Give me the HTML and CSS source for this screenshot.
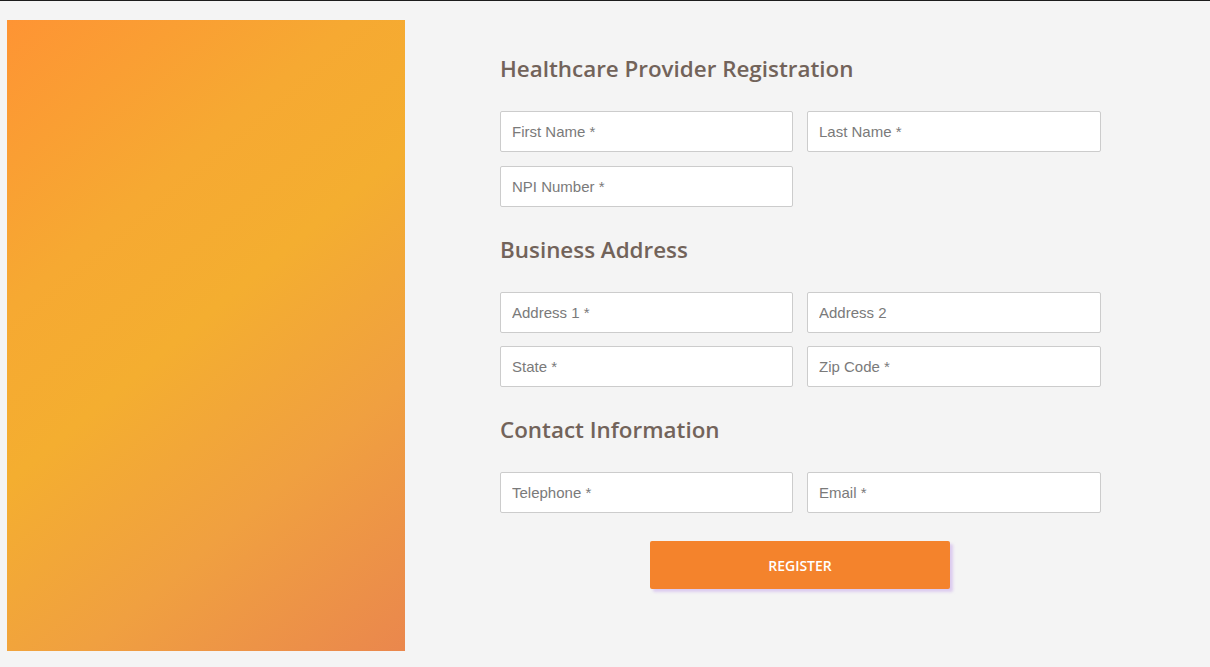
FILE: index.html
```html
<!DOCTYPE html>
<html lang="en">
<head>
<meta charset="utf-8">
<title>Healthcare Provider Registration</title>
<link rel="stylesheet" href="styles.css">
</head>
<body>
<div class="page">
  <aside class="hero"></aside>
  <form class="form" onsubmit="return false">
    <h2 class="section-title">Healthcare Provider Registration</h2>
    <div class="grid">
      <input class="field" type="text" placeholder="First Name *">
      <input class="field" type="text" placeholder="Last Name *">
      <input class="field" type="text" placeholder="NPI Number *">
    </div>
    <h2 class="section-title">Business Address</h2>
    <div class="grid grid--tight">
      <input class="field" type="text" placeholder="Address 1 *">
      <input class="field" type="text" placeholder="Address 2">
      <input class="field" type="text" placeholder="State *">
      <input class="field" type="text" placeholder="Zip Code *">
    </div>
    <h2 class="section-title">Contact Information</h2>
    <div class="grid">
      <input class="field" type="text" placeholder="Telephone *">
      <input class="field" type="text" placeholder="Email *">
    </div>
    <div class="actions">
      <button class="btn" type="submit">REGISTER</button>
    </div>
  </form>
</div>
</body>
</html>
```

FILE: styles.css
```css
html, body {
  margin: 0;
  padding: 0;
  height: 100%;
}
body {
  background: #f4f4f4;
  border-top: 1px solid #1c1c1c;
  box-sizing: border-box;
  font-family: "Open Sans", "Liberation Sans", sans-serif;
}
.page {
  display: flex;
  align-items: flex-start;
  padding: 19px 0 0 7px;
}
.hero {
  flex: 0 0 398px;
  height: 631px;
  background: linear-gradient(140deg, #fe9434 0%, #f6a932 30%, #f4ae30 48%, #f0a040 72%, #ea874d 100%);
}
.form {
  margin-left: 95px;
  width: 601px;
  padding-top: 34px;
}
.section-title {
  margin: 0 0 27px;
  font-size: 22.4px;
  line-height: 30px;
  font-weight: 600;
  color: #72635a;
}
.grid {
  display: grid;
  grid-template-columns: 293px 294px;
  column-gap: 14px;
  row-gap: 14px;
  margin-bottom: 28px;
}
.grid--tight {
  row-gap: 13px;
}
.field {
  box-sizing: border-box;
  height: 41px;
  width: 100%;
  margin: 0;
  padding: 0 11px;
  border: 1px solid #cccccc;
  border-radius: 2px;
  background: #ffffff;
  font-family: "Liberation Sans", Arial, sans-serif;
  font-size: 15px;
  color: #555;
  outline: none;
}
.field::placeholder {
  color: #7a7a7a;
  opacity: 1;
}
.actions {
  display: flex;
  justify-content: center;
  padding-right: 1px;
}
.btn {
  width: 300px;
  height: 48px;
  border: none;
  border-radius: 2px;
  background: #f4832c;
  color: #ffffff;
  font-family: "Open Sans", sans-serif;
  font-size: 14px;
  font-weight: 600;
  box-shadow: 3px 3px 3px rgba(200, 170, 235, 0.55);
  cursor: pointer;
}
```
